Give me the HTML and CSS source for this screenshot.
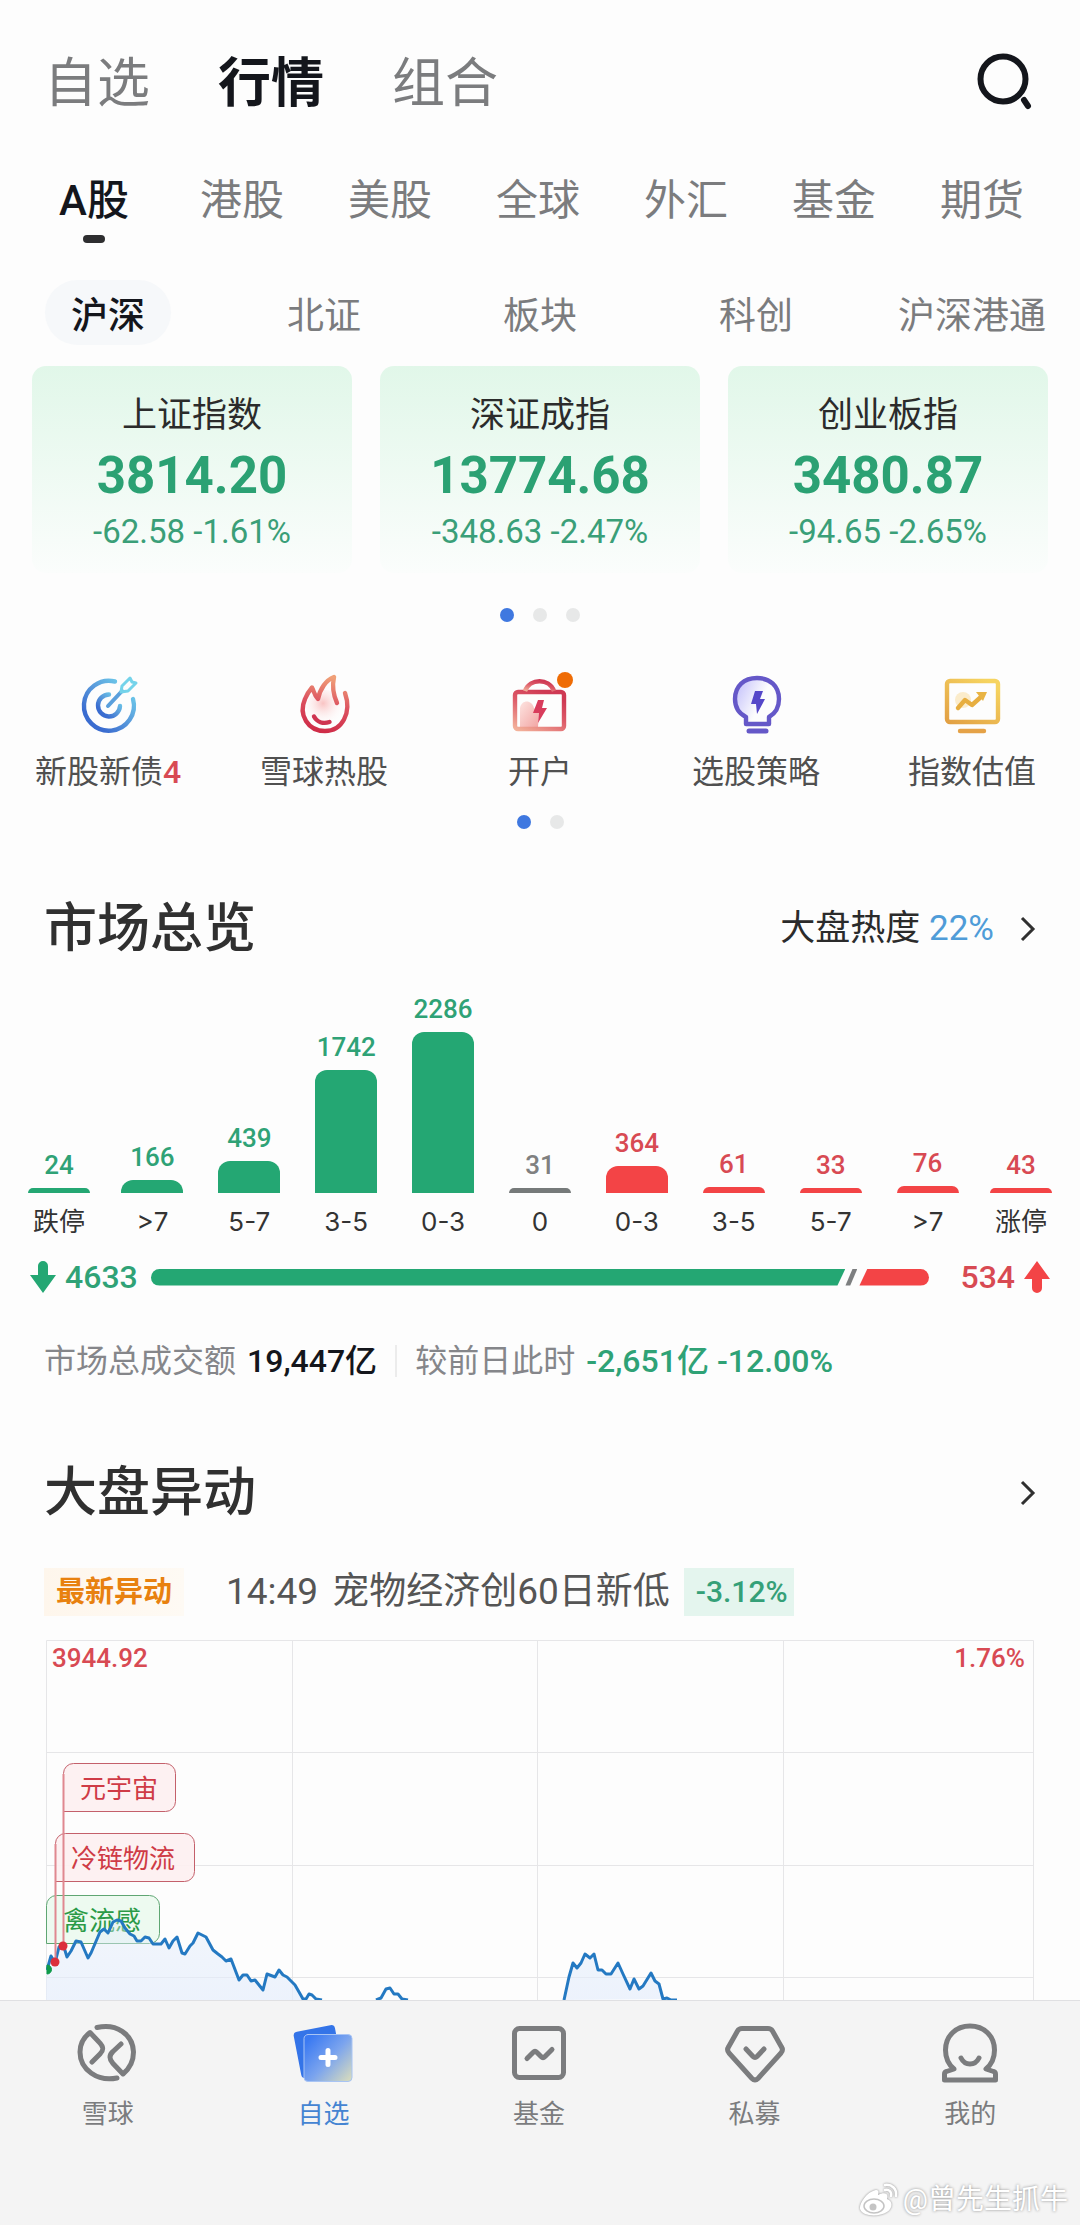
FILE: index.html
```html
<!DOCTYPE html>
<html lang="zh-CN">
  <head>
    <meta charset="UTF-8" />
    <meta name="viewport" content="width=device-width, initial-scale=1.0" />
    <title>行情</title>
    <link rel="stylesheet" href="styles.css">
  </head>
  <body>
    <!-- 顶部导航 -->
    <header class="top">
      <nav class="top-tabs">
        <button type="button">自选</button>
        <button type="button" class="on">行情</button>
        <button type="button">组合</button>
      </nav>
      <button type="button" class="search" aria-label="搜索">
        <svg viewBox="0 0 60 60">
          <circle cx="27" cy="27" r="22.5" />
          <path d="M48 48l4 6" />
        </svg>
      </button>
    </header>

    <nav class="market-tabs">
      <button type="button" class="on">A股</button>
      <button type="button">港股</button>
      <button type="button">美股</button>
      <button type="button">全球</button>
      <button type="button">外汇</button>
      <button type="button">基金</button>
      <button type="button">期货</button>
    </nav>

    <nav class="sub-tabs">
      <button type="button" class="on">沪深</button>
      <button type="button">北证</button>
      <button type="button">板块</button>
      <button type="button">科创</button>
      <button type="button">沪深港通</button>
    </nav>

    <main>
      <!-- 指数卡片 -->
      <section class="cards">
        <a href="#" class="card">
          <span class="name">上证指数</span>
          <strong>3814.20</strong>
          <span class="change">-62.58 -1.61%</span>
        </a>
        <a href="#" class="card">
          <span class="name">深证成指</span>
          <strong>13774.68</strong>
          <span class="change">-348.63 -2.47%</span>
        </a>
        <a href="#" class="card">
          <span class="name">创业板指</span>
          <strong>3480.87</strong>
          <span class="change">-94.65 -2.65%</span>
        </a>
      </section>
      <div class="dots"><i class="on"></i><i></i><i></i></div>

      <!-- 快捷入口 -->
      <section class="quick">
        <a href="#">
          <svg viewBox="0 0 64 64">
            <defs>
              <linearGradient id="gBlue" x1="0" y1="1" x2="1" y2="0">
                <stop offset="0.2" stop-color="#3a6cd0" />
                <stop offset="0.55" stop-color="#5a9cdc" />
                <stop offset="1" stop-color="#74dcf0" />
              </linearGradient>
            </defs>
            <g fill="none" stroke="url(#gBlue)" stroke-width="4.4" stroke-linecap="round" stroke-linejoin="round">
              <path d="M39 9.5A25 25 0 1 0 57 27" />
              <path d="M33 22.5A11 11 0 1 0 44 34" />
            </g>
            <g fill="none" stroke-linecap="round" stroke-linejoin="round">
              <path d="M32 34L46 19" stroke="#5a9fdc" stroke-width="4" />
              <path d="M45 20l1-6 8-8 2 4 4 1-8 8z" stroke="#74d3ea" stroke-width="3" />
            </g>
          </svg>
          <span>新股新债<b>4</b></span>
        </a>
        <a href="#">
          <svg viewBox="0 0 64 64">
            <defs>
              <linearGradient id="gFire" x1="0.6" y1="0" x2="0.4" y2="1">
                <stop offset="0" stop-color="#f0a078" />
                <stop offset="0.5" stop-color="#dc5260" />
                <stop offset="1" stop-color="#cf2c48" />
              </linearGradient>
              <radialGradient id="gFireIn" cx="0.45" cy="0.35" r="0.6">
                <stop offset="0" stop-color="#f9c3c3" />
                <stop offset="1" stop-color="#fff" stop-opacity="0" />
              </radialGradient>
            </defs>
            <circle cx="33" cy="37" r="19" fill="url(#gFireIn)" />
            <g fill="none" stroke-width="4.4" stroke-linecap="round" stroke-linejoin="round">
              <path d="M53 21C60 41 50 59 33 59C16 59 6 43 13 27C15 22 17 19 20 15.5C22 19 22 23 26 27C28 17 34 8 42 5C40 14 41 22 45 31" stroke="url(#gFire)" />
              <path d="M22 44.5C25 50 31 52 37.5 50" stroke="#cf3450" />
            </g>
          </svg>
          <span>雪球热股</span>
        </a>
        <a href="#">
          <svg viewBox="0 0 64 64">
            <defs>
              <linearGradient id="gBag" x1="0" y1="1" x2="0.6" y2="0">
                <stop offset="0" stop-color="#f3b29b" />
                <stop offset="0.6" stop-color="#dd5a68" />
                <stop offset="1" stop-color="#cf3a54" />
              </linearGradient>
              <linearGradient id="gBagIn" x1="0" y1="0" x2="1" y2="1">
                <stop offset="0" stop-color="#fde3e0" />
                <stop offset="1" stop-color="#f2a5a3" />
              </linearGradient>
            </defs>
            <path d="M12 36c2-9 12-8 14 0l5 5-1 14H12z" fill="url(#gBagIn)" />
            <g fill="none" stroke="url(#gBag)" stroke-width="4.4" stroke-linejoin="round">
              <rect x="7" y="20" width="49" height="37" rx="3" />
              <path d="M17 19C22 6 41 6 46 19" />
            </g>
            <path d="M30 28h6l-2 8h5l-9 15 1-10h-6z" fill="#d83c5c" />
            <circle cx="57" cy="8" r="8" fill="#ef6c05" />
          </svg>
          <span>开户</span>
        </a>
        <a href="#">
          <svg viewBox="0 0 64 64">
            <defs>
              <linearGradient id="gBulb" x1="0" y1="0.2" x2="1" y2="0.7">
                <stop offset="0" stop-color="#c5c2fb" />
                <stop offset="0.6" stop-color="#fdfdfd" />
              </linearGradient>
            </defs>
            <path d="M22 52v-7C14 41 11 34 11 27C11 14 20 6 33 6S55 14 55 27C55 34 52 41 45 45v7z" fill="url(#gBulb)" stroke="#6558c8" stroke-width="4.4" stroke-linejoin="round" />
            <path d="M25 59h17" stroke="#6558c8" stroke-width="5" stroke-linecap="round" />
            <path d="M31 19h8l-3 8h5l-8 15-1-10h-5z" fill="#5547c9" />
          </svg>
          <span>选股策略</span>
        </a>
        <a href="#">
          <svg viewBox="0 0 64 64">
            <defs>
              <linearGradient id="gTv" x1="0" y1="1" x2="0.8" y2="0">
                <stop offset="0" stop-color="#e2a044" />
                <stop offset="1" stop-color="#f6d460" />
              </linearGradient>
            </defs>
            <circle cx="23" cy="28" r="8" fill="#fbeccb" />
            <rect x="7" y="9" width="51" height="41" rx="3" fill="none" stroke="url(#gTv)" stroke-width="4.4" />
            <path d="M20 59h24" stroke="#e5a247" stroke-width="4.4" stroke-linecap="round" />
            <path d="M18 36l7-8 7 5 10-9" fill="none" stroke="#e7ae40" stroke-width="4.4" stroke-linejoin="round" stroke-linecap="round" />
            <path d="M36 20h11l-4 9z" fill="#e9b444" />
          </svg>
          <span>指数估值</span>
        </a>
      </section>
      <div class="dots"><i class="on"></i><i></i></div>

      <!-- 市场总览 -->
      <section class="overview">
        <div class="title">
          <h2>市场总览</h2>
          <a href="#">
            <span>大盘热度 <em>22%</em></span>
            <svg class="chevron" viewBox="0 0 16 26"><path d="M2 2l11 11L2 24" /></svg>
          </a>
        </div>

        <div class="bars">
          <div class="down"><b>24</b><i style="height: 5px"></i><span>跌停</span></div>
          <div class="down"><b>166</b><i style="height: 13px"></i><span>&gt;7</span></div>
          <div class="down"><b>439</b><i style="height: 32px"></i><span>5-7</span></div>
          <div class="down"><b>1742</b><i style="height: 123px"></i><span>3-5</span></div>
          <div class="down"><b>2286</b><i style="height: 161px"></i><span>0-3</span></div>
          <div class="flat"><b>31</b><i style="height: 5px"></i><span>0</span></div>
          <div class="up"><b>364</b><i style="height: 27px"></i><span>0-3</span></div>
          <div class="up"><b>61</b><i style="height: 6px"></i><span>3-5</span></div>
          <div class="up"><b>33</b><i style="height: 5px"></i><span>5-7</span></div>
          <div class="up"><b>76</b><i style="height: 7px"></i><span>&gt;7</span></div>
          <div class="up"><b>43</b><i style="height: 5px"></i><span>涨停</span></div>
        </div>

        <!-- 涨跌家数 -->
        <div class="ratio">
          <svg class="arrow" viewBox="0 0 26 32"><path d="M8 5a5 5 0 0 1 10 0v9h8L13 32 0 14h8z" fill="#24a773" /></svg>
          <b class="down">4633</b>
          <div class="track">
            <i class="fall"></i>
            <i class="mid"></i>
            <i class="rise"></i>
          </div>
          <b class="up">534</b>
          <svg class="arrow" viewBox="0 0 26 32"><path d="M8 27a5 5 0 0 0 10 0v-9h8L13 0 0 18h8z" fill="#f34446" /></svg>
        </div>

        <div class="summary">
          <span>市场总成交额</span>
          <b>19,447亿</b>
          <i></i>
          <span>较前日此时</span>
          <b class="down">-2,651亿 -12.00%</b>
        </div>
      </section>

      <!-- 大盘异动 -->
      <section class="moves">
        <div class="title">
          <h2>大盘异动</h2>
          <a href="#" aria-label="更多">
            <svg class="chevron" viewBox="0 0 16 26"><path d="M2 2l11 11L2 24" /></svg>
          </a>
        </div>
        <div class="news">
          <span class="tag">最新异动</span>
          <time>14:49</time>
          <span>宠物经济创60日新低</span>
          <span class="pct">-3.12%</span>
        </div>

        <svg class="chart" viewBox="0 0 988 360">
          <defs>
            <linearGradient id="area" x1="0" y1="0" x2="0" y2="1">
              <stop offset="0" stop-color="#dfeafa" stop-opacity="0.5" />
              <stop offset="1" stop-color="#e6eefc" />
            </linearGradient>
          </defs>
          <!-- 网格 -->
          <path class="grid" d="M.5 360V.5h987V360M0 112.5h988M0 225.5h988M0 337.5h988M246.5 0v360M491.5 0v360M737.5 0v360" />

          <!-- 标签 -->
          <path class="flag-red" d="M17.5 171.5v-38a10 10 0 0 1 10-10h92a10 10 0 0 1 10 10v28a10 10 0 0 1-10 10z" />
          <path class="flag-red" d="M9.5 241.5v-38a10 10 0 0 1 10-10h119a10 10 0 0 1 10 10v28a10 10 0 0 1-10 10z" />
          <path class="flag-green" d="M.5 303.5v-38a10 10 0 0 1 10-10h93a10 10 0 0 1 10 10v28a10 10 0 0 1-10 10z" />
          <text class="t-red" x="34" y="158">元宇宙</text>
          <text class="t-red" x="25" y="228">冷链物流</text>
          <text class="t-green" x="17" y="290">禽流感</text>

          <!-- 分时线 -->
          <path class="fill" d="M0 360V330L5 316 9 323 13 307 17 304 21 317 25 311 30 301 35 302 42 318 45 313 51 299 54 292 58 289 62 293 67 282 71 280 75 281 79 288 84 294 88 296 91 301 95 301 99 297 103 298 107 304 115 304 119 299 123 308 127 301 131 297 136 313 139 314 144 306 147 303 152 293 156 295 160 297 167 310 172 314 176 317 180 321 185 319 193 340 197 335 201 335 205 341 209 340 217 350 221 334 229 337 233 330 237 335 241 337 249 345 257 360zM518 360L523 337 527 323 531 328 535 323 539 314 544 318 548 314 552 330 556 330 560 334 565 334 572 323 577 334 584 349 588 339 593 349 597 346 605 333 609 341 613 344 617 359z" />
          <path class="line" d="M1 330L5 316 9 323 13 307 17 304 21 317 25 311 30 301 35 302 42 318 45 313 51 299 54 292 58 289 62 293 67 282 71 280 75 281 79 288 84 294 88 296 91 301 95 301 99 297 103 298 107 304 115 304 119 299 123 308 127 301 131 297 136 313 139 314 144 306 147 303 152 293 156 295 160 297 167 310 172 314 176 317 180 321 185 319 193 340 197 335 201 335 205 341 209 340 217 350 221 334 229 337 233 330 237 335 241 337 249 345 257 359 260 359 263 354 266 355 270 359 276 360" />
          <path class="line" d="M330 360L335 358 340 349 344 348 348 354 352 354 356 359 362 360" />
          <path class="line" d="M518 360L523 337 527 323 531 328 535 323 539 314 544 318 548 314 552 330 556 330 560 334 565 334 572 323 577 334 584 349 588 339 593 349 597 346 605 333 609 341 613 344 617 359 621 358 625 360 631 360" />
          <path class="stem" d="M17.5 134v172M9.5 204v118" />
          <path d="M1 325a4.5 4.5 0 0 1 0 9z" fill="#0f9b4a" stroke="#0f9b4a" />
          <circle cx="9" cy="322" r="4.5" fill="#dc2f3c" />
          <circle cx="17" cy="306" r="4.5" fill="#dc2f3c" />

          <text class="axis" x="6" y="27">3944.92</text>
          <text class="axis" x="979" y="27" text-anchor="end">1.76%</text>
        </svg>
      </section>
    </main>

    <!-- 底部导航 -->
    <nav class="tabbar">
      <a href="#">
        <svg viewBox="0 0 64 64">
          <path d="M21 7.5C40 3 57 14 57.5 32C57.5 41 53 49 47 54L37 43.5C33 39 33 35 37 31.5L45 24" />
          <path d="M41 58C22 62 4 50 4 32C4 24 8 17 14 12.5L23 22C28 27 28 30 24 34L16 42" />
        </svg>
        <span>雪球</span>
      </a>
      <a href="#" class="on">
        <svg viewBox="0 0 64 64">
          <defs>
            <linearGradient id="gCard" x1="0.1" y1="0.1" x2="1" y2="0.9">
              <stop offset="0" stop-color="#3b7af2" />
              <stop offset="0.5" stop-color="#7ba4ee" />
              <stop offset="1" stop-color="#d3d9c0" />
            </linearGradient>
          </defs>
          <rect x="6" y="8" width="42" height="47" rx="4" transform="rotate(-11 27 31)" fill="#3474e8" stroke="none" />
          <rect x="13" y="14.5" width="48" height="47" rx="4" fill="url(#gCard)" stroke="#a8c4f4" stroke-width="1" />
          <path d="M37 30.5v14M30 37.5h14" stroke="#fff" />
        </svg>
        <span>自选</span>
      </a>
      <a href="#">
        <svg viewBox="0 0 64 64">
          <rect x="7.5" y="8.5" width="49" height="49" rx="5" />
          <path d="M20 38.5l6-6q2-2 4 0l4 4q2 2 4 0l7-7" />
        </svg>
        <span>基金</span>
      </a>
      <a href="#">
        <svg viewBox="0 0 64 64">
          <path d="M19 8.5h26q3 0 4.5 2.5l9 16q2 3-.5 6L35 58.5q-3 3-6 0L6 33q-2.5-3-.5-6l9-16Q16 8.5 19 8.5z" />
          <path d="M23 29l7 7.5q2 2 4 0l7-7.5" />
        </svg>
        <span>私募</span>
      </a>
      <a href="#">
        <svg viewBox="0 0 64 64">
          <path d="M6.5 60V54q0-2 2-2.5L16 49C10 44 7.5 37 7.5 30C7.5 16 18 6 32 6S56.5 16 56.5 30C56.5 37 54 44 48 49l7.5 2.5q2 .5 2 2.5V60z" />
          <path d="M23 38c4 8 14 8 18 0" />
        </svg>
        <span>我的</span>
      </a>
      <p class="sign">
        <svg viewBox="0 0 40 34">
          <path d="M14 8C20 5 20 9 19 12C25 9 30 10 28 16C34 18 34 25 28 29C20 34 4 34 1 26C0 20 8 10 14 8z" fill="#fff" />
          <ellipse cx="15" cy="23" rx="10" ry="7" fill="none" stroke="#c4c4c4" stroke-width="1.5" />
          <circle cx="14" cy="24" r="3.5" fill="#c4c4c4" />
          <path d="M26 2c7-1 12 4 11 11M26 7c4-1 7 2 6 6" fill="none" stroke="#fff" stroke-width="2.5" stroke-linecap="round" />
        </svg>
        @曾先生抓牛
      </p>
    </nav>
  </body>
</html>
```

FILE: styles.css
```css
* {
  box-sizing: border-box;
}
body {
  display: flex;
  flex-direction: column;
  min-height: 100vh;
  margin: 0;
  background: #fdfdfd;
  color: #2b2b2b;
  font-family: Roboto, "Noto Sans CJK SC", sans-serif;
}
h2,
p {
  margin: 0;
}
a {
  color: inherit;
  text-decoration: none;
}
button {
  padding: 0;
  border: 0;
  background: none;
  color: #7b7c7e;
  font-family: inherit;
}
i,
em {
  font-style: normal;
}
svg {
  display: block;
  overflow: visible;
}
.on {
  color: #14161c;
}
.down {
  color: #2fa276;
}
.up {
  color: #d84a53;
}
.flat {
  color: #808080;
}

/* 顶部 */
.top {
  display: flex;
  justify-content: space-between;
  align-items: center;
  height: 164px;
  padding: 0 44px;
}
.top-tabs {
  display: flex;
  gap: 68px;
  padding-top: 4px;
}
.top-tabs button {
  font-size: 53px;
  line-height: 60px;
}
.top-tabs .on {
  font-weight: 700;
}
.search svg {
  width: 60px;
  height: 60px;
  fill: none;
  stroke: #14161c;
  stroke-width: 6;
  stroke-linecap: round;
}

/* 市场切换 */
.market-tabs {
  display: grid;
  grid-template-columns: repeat(7, 1fr);
  padding: 13px 24px 0 20px;
}
.market-tabs button {
  display: flex;
  flex-direction: column;
  align-items: center;
  font-size: 42px;
  line-height: 48px;
}
.market-tabs .on {
  font-weight: 500;
}
.market-tabs .on::after {
  content: "";
  width: 22px;
  height: 8px;
  margin-top: 10px;
  border-radius: 4px;
  background: #2e2e30;
}

.sub-tabs {
  display: grid;
  grid-template-columns: repeat(5, 1fr);
  justify-items: center;
  margin: 37px 0 21px;
}
.sub-tabs button {
  height: 65px;
  font-size: 37px;
}
.sub-tabs .on {
  padding: 0 26px;
  border-radius: 33px;
  background: #f6f8fa;
  font-weight: 500;
}

/* 指数卡片 */
.cards {
  display: grid;
  grid-template-columns: repeat(3, 1fr);
  gap: 28px;
  padding: 0 32px;
}
.card {
  display: flex;
  flex-direction: column;
  align-items: center;
  gap: 6px;
  padding: 26px 0 21px;
  border-radius: 14px;
  background: linear-gradient(#e1f7e9, #fbfdfc);
}
.card .name {
  font-size: 35px;
  line-height: 48px;
}
.card strong {
  color: #2ba173;
  font-size: 51px;
  line-height: 60px;
}
.card .change {
  color: #3a9f78;
  font-size: 33px;
  line-height: 40px;
}

.dots {
  display: flex;
  justify-content: center;
  gap: 19px;
  margin-top: 35px;
}
.dots i {
  width: 14px;
  height: 14px;
  border-radius: 50%;
  background: #e7e8e8;
}
.dots .on {
  background: #3f78e0;
}

/* 快捷入口 */
.quick {
  display: grid;
  grid-template-columns: repeat(5, 1fr);
  margin-top: 50px;
}
.quick a {
  display: flex;
  flex-direction: column;
  align-items: center;
  gap: 16px;
  color: #505050;
  font-size: 32px;
  line-height: 40px;
}
.quick svg {
  width: 64px;
  height: 64px;
}
.quick b {
  color: #d84a53;
  font-weight: 500;
}
.quick + .dots {
  margin-top: 23px;
}

/* 区块标题 */
.title {
  display: flex;
  justify-content: space-between;
  align-items: center;
  padding: 0 44px;
}
.title h2 {
  color: #303030;
  font-size: 53px;
  font-weight: 500;
  line-height: 60px;
}
.title a {
  display: flex;
  align-items: center;
  gap: 14px;
  font-size: 35px;
  line-height: 48px;
}
.title em {
  color: #4f9cd8;
}
.chevron {
  width: 16px;
  height: 26px;
  margin-left: 12px;
  fill: none;
  stroke: #303030;
  stroke-width: 3;
}

/* 涨跌分布 */
.overview {
  margin-top: 70px;
}
.bars {
  display: grid;
  grid-template-columns: 76px repeat(9, 1fr) 76px;
  align-items: end;
  justify-items: center;
  margin-top: 34px;
  padding: 0 28px;
}
.bars div {
  display: flex;
  flex-direction: column;
  align-items: center;
  width: 62px;
}
.bars div:first-child {
  justify-self: start;
}
.bars div:last-child {
  justify-self: end;
}
.bars b {
  font-size: 26px;
  font-weight: 500;
  line-height: 32px;
}
.bars i {
  width: 100%;
  margin: 7px 0 13px;
  border-radius: 12px 12px 0 0;
  background: #767a7a;
}
.bars .down i {
  background: #24a773;
}
.bars .up i {
  background: #f34446;
}
.bars span {
  color: #333;
  font-family: Inter, "Noto Sans CJK SC", sans-serif;
  font-size: 26px;
  line-height: 32px;
  white-space: nowrap;
}

.ratio {
  display: flex;
  align-items: center;
  gap: 9px;
  height: 34px;
  margin-top: 22px;
  padding: 0 30px;
}
.ratio b {
  font-size: 32px;
  font-weight: 500;
}
.ratio .arrow {
  width: 26px;
  height: 32px;
}
.track {
  display: flex;
  flex: 1;
  height: 17px;
  margin: 0 22px 0 4px;
}
/* 斜切 */
.fall {
  flex: 695;
  border-radius: 9px 0 0 9px;
  background: #24a773;
  clip-path: polygon(0 0, 100% 0, calc(100% - 8px) 100%, 0 100%);
}
.mid {
  width: 12px;
  background: #7d7f80;
  clip-path: polygon(60% 0, 100% 0, 40% 100%, 0 100%);
}
.rise {
  flex: 70;
  margin-left: 2px;
  border-radius: 0 9px 9px 0;
  background: #f34446;
  clip-path: polygon(8px 0, 100% 0, 100% 100%, 0 100%);
}

.summary {
  display: flex;
  align-items: center;
  gap: 11px;
  margin-top: 47px;
  padding: 0 44px;
  color: #85868a;
  font-size: 32px;
  line-height: 40px;
}
.summary b {
  font-weight: 500;
}
.summary b:not(.down) {
  color: #14161c;
}
.summary i {
  width: 2px;
  height: 32px;
  margin: 0 7px;
  background: #ececec;
}

/* 大盘异动 */
.moves {
  margin-top: 82px;
}
.news {
  display: flex;
  align-items: center;
  height: 48px;
  margin: 45px 44px 24px;
  color: #555;
  font-size: 37px;
  line-height: 48px;
}
.news .tag {
  margin-right: 42px;
  padding: 0 12px;
  background: linear-gradient(90deg, #fef6ec, #fefaf4);
  color: #e8810f;
  font-size: 29px;
  font-weight: 700;
}
.news time {
  margin-right: 14px;
}
.news .pct {
  margin-left: 14px;
  padding: 0 6px 0 12px;
  background: #e4f5ee;
  color: #35a078;
  font-size: 30px;
  font-weight: 500;
}
.chart {
  width: calc(100% - 92px);
  margin: 0 46px;
  overflow: hidden;
}
.chart text {
  font-size: 26px;
}
.grid {
  fill: none;
  stroke: #e6e6e8;
}
.flag-red {
  fill: #fdf0f1;
  fill-opacity: 0.9;
  stroke: #c4606b;
}
.flag-green {
  fill: #ebf9ee;
  fill-opacity: 0.9;
  stroke: #5fa673;
}
.t-red {
  fill: #cf3b46;
}
.t-green {
  fill: #2b9a47;
}
.fill {
  fill: url(#area);
  fill-opacity: 0.7;
}
.line {
  fill: none;
  stroke: #2479c2;
  stroke-width: 3;
  stroke-linejoin: round;
}
.stem {
  stroke: #e08890;
  stroke-width: 2;
}
.chart .axis {
  fill: #d84a53;
  font-weight: 500;
}

/* 底部导航 */
.tabbar {
  position: relative;
  display: grid;
  flex: 1;
  grid-template-columns: repeat(5, 1fr);
  align-content: start;
  padding: 19px 2px 94px 0;
  border-top: 1px solid #e0e0e2;
  background: #f4f4f4;
}
.tabbar a {
  display: flex;
  flex-direction: column;
  align-items: center;
  gap: 14px;
  color: #7b7c7e;
  font-size: 26px;
  line-height: 32px;
}
.tabbar a svg {
  width: 64px;
  height: 64px;
  fill: none;
  stroke: #7b7c7e;
  stroke-width: 5;
  stroke-linecap: round;
  stroke-linejoin: round;
}
.tabbar .on {
  color: #4484d2;
}
/* 右下角署名 */
.sign {
  position: absolute;
  right: 12px;
  bottom: 8px;
  display: flex;
  align-items: center;
  gap: 4px;
  color: #fff;
  font-size: 28px;
  line-height: 32px;
  text-shadow: 0 0 3px #888;
}
.sign svg {
  width: 40px;
  height: 34px;
  filter: drop-shadow(0 0 1px #888);
}
```
